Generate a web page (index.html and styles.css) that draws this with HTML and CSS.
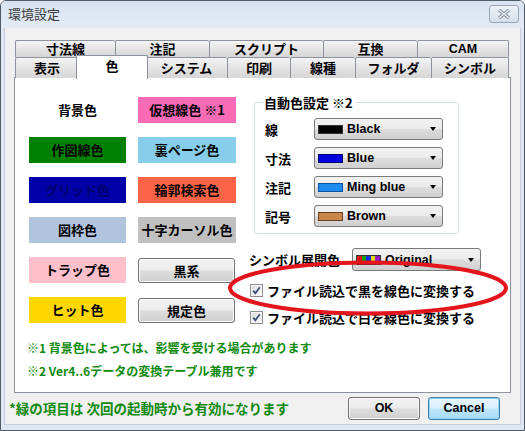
FILE: index.html
```html
<!DOCTYPE html>
<html lang="ja">
<head>
<meta charset="utf-8">
<title>環境設定</title>
<link rel="stylesheet" href="styles.css">
</head>
<body>
<div class="window">
  <div class="titlebar">
    <span class="title">環境設定</span>
    <span class="close">
      <svg width="14" height="10" viewBox="0 0 14 10"><path d="M2 1 L12 9 M12 1 L2 9" stroke="#7a8594" stroke-width="3.2" fill="none"/><path d="M2 1 L12 9 M12 1 L2 9" stroke="#eef2f7" stroke-width="1.6" fill="none"/></svg>
    </span>
  </div>
  <div class="client">
    <div class="tabs">
      <div class="tabrow row-back">
        <div class="tab">寸法線</div>
        <div class="tab">注記</div>
        <div class="tab">スクリプト</div>
        <div class="tab">互換</div>
        <div class="tab latin">CAM</div>
      </div>
      <div class="tabrow row-front">
        <div class="tab">表示</div>
        <div class="tab selected">色</div>
        <div class="tab">システム</div>
        <div class="tab">印刷</div>
        <div class="tab">線種</div>
        <div class="tab">フォルダ</div>
        <div class="tab">シンボル</div>
      </div>
    </div>
    <div class="panel">
      <div class="top">
        <div class="colors">
          <div class="cbtn plain">背景色</div>
          <div class="cbtn c-virtual">仮想線色 ※1</div>
          <div class="cbtn c-draw">作図線色</div>
          <div class="cbtn c-back">裏ページ色</div>
          <div class="cbtn c-grid">グリッド色</div>
          <div class="cbtn c-outline">輪郭検索色</div>
          <div class="cbtn c-frame">図枠色</div>
          <div class="cbtn c-cross">十字カーソル色</div>
          <div class="cbtn c-trap">トラップ色</div>
          <div class="pbtn">黒系</div>
          <div class="cbtn c-hit">ヒット色</div>
          <div class="pbtn">規定色</div>
        </div>
        <div class="right">
          <div class="group">
            <div class="group-title">自動色設定 ※2</div>
            <div class="grow">
              <span class="glabel">線</span>
              <div class="combo"><span class="swatch sw-black"></span><span class="ctext">Black</span><span class="arrow"></span></div>
            </div>
            <div class="grow">
              <span class="glabel">寸法</span>
              <div class="combo"><span class="swatch sw-blue"></span><span class="ctext">Blue</span><span class="arrow"></span></div>
            </div>
            <div class="grow">
              <span class="glabel">注記</span>
              <div class="combo"><span class="swatch sw-ming"></span><span class="ctext">Ming blue</span><span class="arrow"></span></div>
            </div>
            <div class="grow">
              <span class="glabel">記号</span>
              <div class="combo"><span class="swatch sw-brown"></span><span class="ctext">Brown</span><span class="arrow"></span></div>
            </div>
          </div>
          <div class="symrow">
            <span class="symlabel">シンボル展開色</span>
            <div class="combo wide"><span class="swatch sw-orig"></span><span class="ctext">Original</span><span class="arrow"></span></div>
          </div>
          <label class="check">
            <span class="cb"><svg width="9" height="9" viewBox="0 0 9 9"><path d="M1.2 4.6 L3.4 7.2 L7.8 1.3" stroke="#3d4f7a" stroke-width="1.8" fill="none"/></svg></span>
            <span>ファイル読込で黒を線色に変換する</span>
          </label>
          <label class="check">
            <span class="cb"><svg width="9" height="9" viewBox="0 0 9 9"><path d="M1.2 4.6 L3.4 7.2 L7.8 1.3" stroke="#3d4f7a" stroke-width="1.8" fill="none"/></svg></span>
            <span>ファイル読込で白を線色に変換する</span>
          </label>
        </div>
      </div>
      <div class="notes">
        <div class="note">※1 背景色によっては、影響を受ける場合があります</div>
        <div class="note">※2 Ver4..6データの変換テーブル兼用です</div>
      </div>
    </div>
    <div class="footer">
      <span class="footnote">*緑の項目は 次回の起動時から有効になります</span>
      <div class="btn">OK</div>
      <div class="btn default">Cancel</div>
    </div>
  </div>
  <svg class="mark" width="284" height="58" viewBox="0 0 284 58"><ellipse cx="141" cy="29" rx="138" ry="25.5" fill="none" stroke="#e3141b" stroke-width="4"/></svg>
</div>
</body>
</html>
```

FILE: styles.css
```css
* { box-sizing: border-box; }
html, body { margin: 0; padding: 0; background: #fff; }
body {
  font-family: "Noto Sans CJK JP", "Noto Sans", sans-serif;
  font-size: 13px;
  color: #000;
}
.window {
  position: relative;
  width: 525px;
  height: 431px;
  border: 1px solid #4f5a68;
  border-radius: 6px 6px 0 0;
  background: #dfe8f2;
  overflow: hidden;
}
.titlebar {
  height: 27px;
  display: flex;
  align-items: flex-start;
  padding: 4px 5px 0 7px;
  background: linear-gradient(#d9e4f1, #e3ebf5);
}
.title {
  font-size: 13px;
  line-height: 18px;
  color: #3a3a3a;
  font-weight: 400;
}
.close {
  margin-left: auto;
  width: 30px;
  height: 18px;
  border: 1px solid #95a3b6;
  border-radius: 3px;
  background: linear-gradient(#eef3f9, #d5dfeb);
  display: flex;
  align-items: center;
  justify-content: center;
}
.close svg { display: block; }
.client {
  margin: 0 3px;
  height: 397px;
  background: #f0f0f0;
  border: 1px solid #c5ceda;
  border-top: none;
  padding-top: 12px;
}
.tabs { margin-left: 10px; width: 494px; }
.tabrow { display: grid; }
.row-back { grid-template-columns: 100px 94px 114px 94px 92px; height: 17px; }
.row-front { grid-template-columns: 63px 68px 81px 63px 65px 76px 78px; height: 20px; }
.tab {
  border: 1px solid #8d939c;
  border-bottom: none;
  border-right: none;
  border-radius: 2px 2px 0 0;
  background: linear-gradient(#f4f4f4, #e1e1e1 60%, #d6d6d6);
  font-weight: 700;
  text-align: center;
  line-height: 16px;
  white-space: nowrap;
}
.tab:last-child { border-right: 1px solid #8d939c; }
.row-front .tab { line-height: 20px; }
.tab.latin { font-family: "Liberation Sans", sans-serif; font-size: 12.5px; }
.tab.selected {
  position: relative;
  z-index: 2;
  margin: -2px -2px -1px;
  background: #fff;
  border-right: 1px solid #8d939c;
  line-height: 19px;
}
.tab.selected + .tab { border-left: none; }
.panel {
  margin-left: 9px;
  width: 497px;
  height: 316px;
  background: #fff;
  border: 1px solid #8d939c;
  padding: 19px 0 0 14px;
}
.top { display: flex; align-items: flex-start; height: 232px; }
.colors {
  display: grid;
  grid-template-columns: 97px 98px;
  grid-auto-rows: 26px;
  column-gap: 12px;
  row-gap: 14px;
}
.cbtn {
  font-weight: 700;
  text-align: center;
  line-height: 26px;
  white-space: nowrap;
}
.plain { background: #fff; }
.c-virtual { background: #f96bb5; }
.c-draw { background: #008000; }
.c-back { background: #87ceeb; }
.c-grid { background: #0000a8; color: #00006a; }
.c-outline { background: #fd6347; }
.c-frame { background: #b0c4de; }
.c-cross { background: #c0c0c0; }
.c-trap { background: #ffc0cb; }
.c-hit { background: #ffd700; }
.pbtn {
  height: 25px;
  width: 97px;
  margin-top: 1px;
  border: 1px solid #707070;
  border-radius: 3px;
  background: linear-gradient(#f2f2f2, #ebebeb 48%, #dddddd 52%, #cfcfcf);
  box-shadow: inset 0 0 0 1px #fbfbfb;
  font-weight: 700;
  text-align: center;
  line-height: 23px;
}
.right { margin-left: 13px; }
.group {
  margin: 5px 0 0 5px;
  width: 205px;
  border: 1px solid #d5dfe5;
  border-radius: 3px;
  padding: 0 0 6px 10px;
}
.group-title {
  display: block;
  width: fit-content;
  height: 17px;
  margin: -9px 0 0 -1px;
  padding: 0 3px 0 0;
  background: #fff;
  font-weight: 700;
  line-height: 17px;
}
.grow {
  display: flex;
  align-items: center;
  height: 22px;
  margin-top: 7px;
}
.glabel { width: 49px; font-weight: 700; }
.combo {
  width: 129px;
  height: 22px;
  display: flex;
  align-items: center;
  border: 1px solid #7a7a7a;
  border-radius: 3px;
  background: linear-gradient(#f2f2f2, #ebebeb 48%, #dddddd 52%, #cfcfcf);
  padding: 0 6px 0 3px;
  font-family: "Liberation Sans", sans-serif;
  font-weight: 700;
  font-size: 12.5px;
}
.combo.wide { width: 129px; height: 23px; }
.swatch {
  width: 25px;
  height: 9px;
  border: 1px solid #333;
  margin-right: 4px;
  flex: none;
}
.sw-black { background: #000; }
.sw-blue { background: #0000e0; border-color: #00006a; }
.sw-ming { background: #1e8cf0; border-color: #1050a0; }
.sw-brown { background: #c8864b; border-color: #6a4020; }
.sw-orig {
  background: linear-gradient(90deg, #e01010 0 20%, #10a010 20% 40%, #1030e0 40% 60%, #e0e010 60% 80%, #9020c0 80%);
  height: 10px;
}
.ctext { flex: 1; white-space: nowrap; }
.arrow {
  width: 0; height: 0;
  border-left: 3.5px solid transparent;
  border-right: 3.5px solid transparent;
  border-top: 4px solid #000;
}
.symrow {
  display: flex;
  align-items: center;
  margin-top: 14px;
  height: 23px;
}
.symlabel { width: 103px; font-weight: 700; white-space: nowrap; }
.check {
  display: flex;
  align-items: center;
  height: 20px;
  font-weight: 700;
  white-space: nowrap;
}
.symrow + .check { margin-top: 9px; }
.check + .check { margin-top: 7px; }
.cb {
  width: 13px; height: 13px;
  margin: 0 4px 0 1px;
  border: 1px solid #8e8f8f;
  background: linear-gradient(135deg, #dcdcdc, #fdfdfd);
  box-shadow: inset 0 0 0 1px #f4f4f4;
  display: flex;
  align-items: center;
  justify-content: center;
  flex: none;
}
.cb svg { display: block; }
.notes { margin: 9px 0 0 -2px; }
.note {
  color: #108a10;
  font-weight: 700;
  font-size: 12px;
  line-height: 20px;
}
.note + .note { margin-top: 3px; }
.footer {
  display: flex;
  align-items: center;
  margin-top: 3px;
  padding: 0 20px 0 4px;
  height: 24px;
}
.footnote {
  color: #108a10;
  font-weight: 700;
  font-size: 13.5px;
  white-space: nowrap;
}
.btn {
  width: 72px;
  height: 23px;
  border: 1px solid #707070;
  border-radius: 3px;
  background: linear-gradient(#f2f2f2, #ebebeb 48%, #dddddd 52%, #cfcfcf);
  box-shadow: inset 0 0 0 1px #fbfbfb;
  font-family: "Liberation Sans", sans-serif;
  font-weight: 700;
  font-size: 12.5px;
  text-align: center;
  line-height: 21px;
  margin-left: 8px;
}
.footnote + .btn { margin-left: auto; }
.btn.default {
  border-color: #3c7fb1;
  background: linear-gradient(#eaf6fd, #d9f0fc 48%, #bee6fd 52%, #a7d9f5);
  box-shadow: inset 0 0 0 1px #8fd0f5;
}
.mark {
  position: absolute;
  left: 226px;
  top: 258px;
}
```
